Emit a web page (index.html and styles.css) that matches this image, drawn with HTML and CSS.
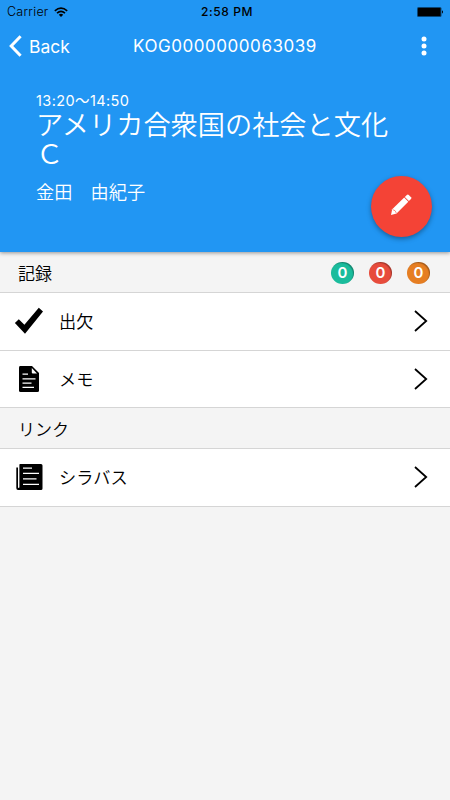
FILE: index.html
```
<!DOCTYPE html>
<html lang="ja">
<head>
  <meta charset="UTF-8" />
  <meta name="viewport" content="width=device-width, initial-scale=1" />
  <title>KOG0000000063039</title>
  <link rel="stylesheet" href="styles.css">
</head>
<body>
  <header class="header">
    <div class="status-bar">
      <div class="carrier">
        <span>Carrier</span>
        <svg class="wifi" width="14" height="10" viewBox="0 0 14 10" fill="none" stroke="#000" stroke-width="1.6">
          <path d="M0.8 3.8Q7 -1.6 13.2 3.8" />
          <path d="M3 6.2Q7 2.7 11 6.2" />
          <path d="M7 9.9L4.8 7.7Q7 6 9.2 7.7Z" fill="#000" stroke="none" />
        </svg>
      </div>
      <div class="clock">2:58 PM</div>
      <svg class="battery" width="27" height="10" viewBox="0 0 27 10">
        <rect x="0" y="0" width="24.5" height="10" rx="1.5" fill="#0b4675" />
        <rect x="1" y="1" width="22.5" height="8" rx="0.5" />
        <path d="M25 3.3Q27 5 25 6.7Z" />
      </svg>
    </div>

    <nav class="nav-bar">
      <div class="back">
        <svg width="13" height="22" viewBox="0 0 13 22" fill="none" stroke="#fff" stroke-width="3">
          <path d="M11.6 1.3L2.2 11L11.6 20.7" />
        </svg>
        <span>Back</span>
      </div>
      <div class="nav-title">KOG0000000063039</div>
      <svg class="more" width="6" height="20" viewBox="0 0 6 20" fill="#fff">
        <circle cx="3" cy="2.9" r="2.5" />
        <circle cx="3" cy="10" r="2.5" />
        <circle cx="3" cy="17.1" r="2.5" />
      </svg>
    </nav>

    <div class="course">
      <div class="time">13:20〜14:50</div>
      <h1>アメリカ合衆国の社会と文化Ｃ</h1>
      <div class="teacher">金田　由紀子</div>
    </div>

    <button class="edit-button" type="button" aria-label="編集">
      <svg width="22" height="22" viewBox="0 0 22 22" fill="#fff">
        <path d="M2.2 15.2L14.2 3.6L18.3 7.7L6.6 19.6L1 21Z" />
        <path d="M14.8 3L16.8 1Q17.8 .2 18.8 1L21 3.2Q21.8 4.2 21 5.1L18.9 7.1Z" />
        <path d="M2.6 15.6Q5.6 16 6.4 19.2" fill="none" stroke="#f44336" stroke-width=".6" />
      </svg>
    </button>
  </header>

  <main>
    <div class="section-title">
      <span>記録</span>
      <div class="badges">
        <span class="badge green">0</span>
        <span class="badge red">0</span>
        <span class="badge orange">0</span>
      </div>
    </div>
    <div class="row">
      <svg class="icon" width="30" height="28" viewBox="0 0 30 28">
        <path d="M.9 16.1L4.8 12.2L10.4 17.7L24.8 .8L29 4.5L11 26.8Z" />
      </svg>
      <span class="label">出欠</span>
      <svg class="arrow" width="14" height="22" viewBox="0 0 14 22"><path d="M1 1L12.2 11L1 21" /></svg>
    </div>
    <div class="row">
      <svg class="icon" width="30" height="28" viewBox="0 0 30 28">
        <path d="M6 1H18L25 8V25.5Q25 27 23.5 27H6.5Q5 27 5 25.5V2.5Q5 1 6 1Z" />
        <path d="M17.8 3L23 8.5H18.8Q17.8 8.5 17.8 7.5Z" fill="#fff" />
        <path d="M8.5 9.2H14M8.5 13.8H21.5M8.5 18.1H17.5M8.5 22.4H20" stroke="#fff" stroke-width="1.2" />
      </svg>
      <span class="label">メモ</span>
      <svg class="arrow" width="14" height="22" viewBox="0 0 14 22"><path d="M1 1L12.2 11L1 21" /></svg>
    </div>

    <div class="section-title">
      <span>リンク</span>
    </div>
    <div class="row">
      <svg class="icon" width="30" height="28" viewBox="0 0 30 28">
        <path d="M6 1H27Q28.5 1 28.5 2.5V25.5Q28.5 27 27 27H4Q2.3 27 2.3 25V4.5H4V24Q4 25 4.7 25Q5.4 25 5.4 24V2Q5.4 1 6 1Z" />
        <path d="M9 5.2H18M9 10.3H25M9 15.8H22.5M9 21.3H25" stroke="#fff" stroke-width="1.2" />
      </svg>
      <span class="label">シラバス</span>
      <svg class="arrow" width="14" height="22" viewBox="0 0 14 22"><path d="M1 1L12.2 11L1 21" /></svg>
    </div>
  </main>
</body>
</html>
```
FILE: styles.css
```
* {
  box-sizing: border-box;
}
body {
  margin: 0;
  height: 800px;
  background: #f4f4f4;
  color: #000;
  font-family: Inter, "Noto Sans CJK JP", sans-serif;
  font-weight: 350;
}
.header {
  position: relative;
  height: 252px;
  background: #2196f3;
  color: #fff;
  box-shadow: 0 1px 4px rgba(0, 0, 0, 0.4);
}
.status-bar {
  display: grid;
  grid-template-columns: 1fr auto 1fr;
  align-items: center;
  height: 23px;
  padding: 0 6px 0 7px;
  color: #000;
  font-size: 12.5px;
}
.carrier {
  display: flex;
  align-items: center;
  gap: 5px;
  letter-spacing: 0.25px;
}
.clock {
  padding-left: 3px;
  font-size: 12px;
  font-weight: 550;
  letter-spacing: 0.6px;
}
.battery {
  justify-self: end;
}
.nav-bar {
  display: grid;
  grid-template-columns: 1fr auto 1fr;
  align-items: center;
  height: 46px;
  padding: 0 9px;
  font-size: 17.5px;
}
.back {
  display: flex;
  align-items: center;
  gap: 7px;
  font-weight: 400;
}
.nav-title {
  font-size: 17px;
  font-weight: 400;
  letter-spacing: 0.55px;
}
.more {
  justify-self: end;
  margin-right: 14px;
}
.course {
  padding: 23px 50px 0 36px;
}
.time {
  font-size: 14.5px;
  font-weight: 400;
  letter-spacing: 0.4px;
  line-height: 18px;
}
h1 {
  margin: 1px 0 0;
  font-size: 27.2px;
  font-weight: 350;
  line-height: 29px;
}
.teacher {
  margin-top: 11px;
  font-size: 18.2px;
  line-height: 24px;
}
.edit-button {
  position: absolute;
  right: 18px;
  bottom: 15px;
  display: flex;
  align-items: center;
  justify-content: center;
  width: 61px;
  height: 61px;
  padding: 0 2px 4px 0;
  border: none;
  border-radius: 50%;
  background: #f44336;
  box-shadow: 0 2px 5px rgba(0, 0, 0, 0.35);
}
.section-title {
  display: flex;
  align-items: center;
  justify-content: space-between;
  height: 41px;
  padding: 0 20px 0 18px;
  border-bottom: 1px solid #d5d5d5;
  font-size: 17px;
}
.badges {
  display: flex;
  gap: 15px;
  padding-top: 1px;
}
.badge {
  width: 23px;
  height: 22px;
  border-radius: 50%;
  color: #fff;
  font-size: 15px;
  font-weight: 600;
  line-height: 22px;
  text-align: center;
  box-shadow: inset -1px 1px 1px rgba(0, 0, 0, 0.3);
}
.green {
  background: #1abc9c;
}
.red {
  background: #e74c3c;
}
.orange {
  background: #e67e22;
}
.row {
  display: flex;
  align-items: center;
  height: 57.5px;
  padding: 0 22px 0 14px;
  border-bottom: 1px solid #d5d5d5;
  background: #fff;
  font-size: 17.2px;
}
.label {
  padding-bottom: 1px;
}
.icon {
  margin-right: 15px;
}
.arrow {
  margin-left: auto;
  fill: none;
  stroke: #000;
  stroke-width: 1.8;
}
```
